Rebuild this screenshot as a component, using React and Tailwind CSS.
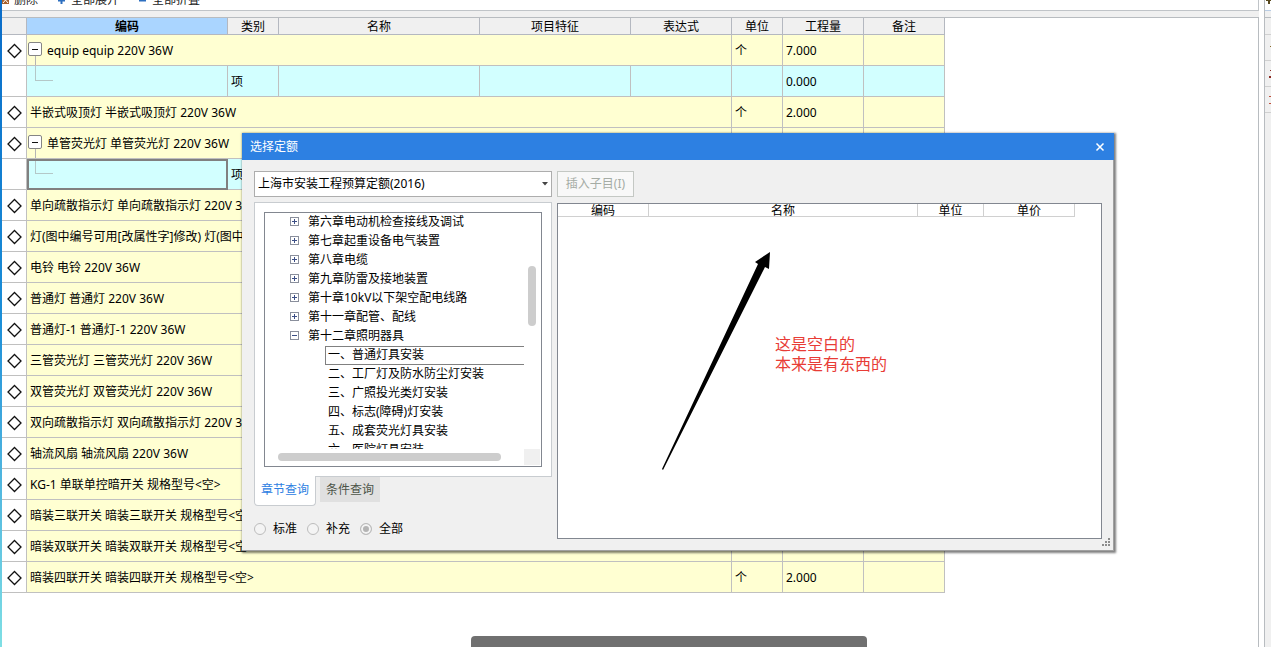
import { useState } from 'react'

const COLUMNS = [
  { label: '', width: 25 },
  { label: '编码', width: 201 },
  { label: '类别', width: 51 },
  { label: '名称', width: 201 },
  { label: '项目特征', width: 151 },
  { label: '表达式', width: 101 },
  { label: '单位', width: 51 },
  { label: '工程量', width: 81 },
  { label: '备注', width: 81 },
]

const ROWS = [
  { name: 'equip equip 220V 36W', qty: '7.000', open: true },
  { child: true, qty: '0.000' },
  { name: '半嵌式吸顶灯 半嵌式吸顶灯 220V 36W', qty: '2.000' },
  { name: '单管荧光灯 单管荧光灯 220V 36W', qty: '2.000', open: true },
  { child: true, qty: '0.000', selected: true },
  { name: '单向疏散指示灯 单向疏散指示灯 220V 36W', qty: '2.000' },
  { name: '灯(图中编号可用[改属性字]修改) 灯(图中编号可用[改属性字]修改)', qty: '2.000' },
  { name: '电铃 电铃 220V 36W', qty: '2.000' },
  { name: '普通灯 普通灯 220V 36W', qty: '2.000' },
  { name: '普通灯-1 普通灯-1 220V 36W', qty: '2.000' },
  { name: '三管荧光灯 三管荧光灯 220V 36W', qty: '2.000' },
  { name: '双管荧光灯 双管荧光灯 220V 36W', qty: '2.000' },
  { name: '双向疏散指示灯 双向疏散指示灯 220V 36W', qty: '2.000' },
  { name: '轴流风扇 轴流风扇 220V 36W', qty: '2.000' },
  { name: 'KG-1 单联单控暗开关 规格型号<空>', qty: '2.000' },
  { name: '暗装三联开关 暗装三联开关 规格型号<空>', qty: '2.000' },
  { name: '暗装双联开关 暗装双联开关 规格型号<空>', qty: '2.000' },
  { name: '暗装四联开关 暗装四联开关 规格型号<空>', qty: '2.000' },
]

const CHAPTERS = [
  '第六章电动机检查接线及调试',
  '第七章起重设备电气装置',
  '第八章电缆',
  '第九章防雷及接地装置',
  '第十章10kV以下架空配电线路',
  '第十一章配管、配线',
  '第十二章照明器具',
]

const SECTIONS = [
  '一、普通灯具安装',
  '二、工厂灯及防水防尘灯安装',
  '三、广照投光类灯安装',
  '四、标志(障碍)灯安装',
  '五、成套荧光灯具安装',
  '六、医院灯具安装',
]

function Diamond() {
  return (
    <svg width="16" height="16" viewBox="0 0 16 16" className="mx-auto block">
      <path d="M8.500 1.500 15 8 8.500 14.500 2 8Z" fill="#fff" stroke="#111" strokeWidth="1.3" />
    </svg>
  )
}

function TreeToggle({ open, label }) {
  return (
    <button aria-label={label} className="mt-1 shrink-0">
      <svg width="9" height="9" viewBox="0 0 9 9" className="block">
        <rect x=".5" y=".5" width="8" height="8" fill="#fff" stroke="#8a8f9c" />
        <path d={open ? 'M2 4.5h5' : 'M2 4.5h5M4.5 2v5'} stroke="#3c4f86" />
      </svg>
    </button>
  )
}

function RowToggle() {
  return (
    <button aria-label="折叠" className="shrink-0">
      <svg width="14" height="14" viewBox="0 0 14 14" className="block">
        <rect x=".5" y=".5" width="13" height="13" rx="1.5" fill="#fff" stroke="#858585" />
        <path d="M4 7.500h6" stroke="#111" />
      </svg>
    </button>
  )
}

function GridRow({ row }) {
  const cell = 'h-[31px] border-r border-b border-[#c0c0c0] p-0'
  const text = `${cell} pt-[2px] pl-[3px]`
  if (row.child) {
    return (
      <tr className="bg-[#d2ffff]">
        <td className={`${cell} bg-white`} />
        <td className={`${cell} align-top ${row.selected ? 'outline-2 -outline-offset-2 outline-[#808080]' : ''}`}>
          <div className="ml-2 h-[15px] w-[18px] border-b border-l border-[#b4c8c8]" />
        </td>
        <td className={text}>项</td>
        <td className={cell} />
        <td className={cell} />
        <td className={cell} />
        <td className={cell} />
        <td className={text}>{row.qty}</td>
        <td className={cell} />
      </tr>
    )
  }
  return (
    <tr className="bg-[#ffffd2]">
      <td className={`${cell} bg-white pt-[2px]`}><Diamond /></td>
      {row.open ? (
        <td colSpan={5} className={cell}>
          <div className="flex h-[30px] pl-px">
            <div className="flex w-[14px] shrink-0 flex-col items-center pt-[7px]">
              <RowToggle />
              <div className="w-px grow bg-[#b4b4b4]" />
            </div>
            <span className="pl-[5px] leading-8">{row.name}</span>
          </div>
        </td>
      ) : (
        <td colSpan={5} className={text}>{row.name}</td>
      )}
      <td className={text}>个</td>
      <td className={text}>{row.qty}</td>
      <td className={cell} />
    </tr>
  )
}

function QuantityGrid() {
  return (
    <table className="w-[943px] table-fixed border-separate border-spacing-0">
      <colgroup>
        {COLUMNS.map((c, i) => <col key={i} style={{ width: c.width }} />)}
      </colgroup>
      <thead>
        <tr>
          {COLUMNS.map((c, i) => (
            <th key={i}
              className={`border-r border-b border-[#b4b8c0] p-0 ${i === 1 ? 'bg-[#aad5ff] font-bold' : 'bg-[#f0f0f0] font-normal'}`}>
              <div className="h-4 leading-[18px]">{c.label}</div>
            </th>
          ))}
        </tr>
      </thead>
      <tbody>
        {ROWS.map((row, i) => <GridRow key={i} row={row} />)}
      </tbody>
    </table>
  )
}

function ChapterTree() {
  return (
    <div className="flex border border-[#828790] bg-white">
      <div className="min-w-0 grow">
        <ul className="h-[236px] overflow-hidden">
          {CHAPTERS.map((c, i) => (
            <li key={c} className="flex h-[19px] items-start gap-[9px] pl-[25px]">
              <TreeToggle open={i === CHAPTERS.length - 1} label={c} />
              <span className="leading-[17px] whitespace-nowrap">{c}</span>
            </li>
          ))}
          {SECTIONS.map((s, i) => (
            <li key={s}
              className={`ml-[60px] h-[19px] border-y border-l pl-[2px] leading-4 whitespace-nowrap ${i === 0 ? 'border-[#808080]' : 'border-transparent'}`}>
              {s}
            </li>
          ))}
        </ul>
        <div className="h-[17px] pt-1 pl-[13px]">
          <div className="h-2 w-[223px] rounded-full bg-[#cdcdcd]" />
        </div>
      </div>
      <div className="flex w-[17px] shrink-0 flex-col">
        <div className="grow pt-[53px] pl-1">
          <div className="h-[60px] w-2 rounded-full bg-[#cdcdcd]" />
        </div>
        <div className="mr-px mb-px h-4 bg-[#f0f0f0]" />
      </div>
    </div>
  )
}

const SCOPES = ['标准', '补充', '全部']

function QuotaDialog() {
  const [scope, setScope] = useState('全部')
  return (
    <div role="dialog" aria-label="选择定额"
      className="absolute top-[133px] left-[242px] w-[872px] bg-[#f0f0f0] shadow-[1px_1px_2px_1px_rgba(0,0,0,0.5)]">
      <div className="flex h-[27px] items-center justify-between bg-[#2d80e2] pr-[9px] pl-2 text-white">
        <h2>选择定额</h2>
        <button aria-label="关闭">
          <svg width="10" height="10" viewBox="0 0 10 10" className="block">
            <path d="M1.500 1.500 8.500 8.500M8.500 1.500 1.500 8.500" stroke="#fff" strokeWidth="1.5" />
          </svg>
        </button>
      </div>

      <div className="flex h-[391px] gap-[5px] border-r border-b border-[#a0a0a0] pt-[11px] pr-[11px] pb-[11px] pl-3">
        <div className="flex w-[298px] shrink-0 flex-col">
          <div className="relative">
            <select aria-label="定额库"
              className="block h-[26px] w-full appearance-none border border-[#adadad] bg-white pl-[3px]">
              <option>上海市安装工程预算定额(2016)</option>
            </select>
            <svg width="6" height="4" viewBox="0 0 6 4" className="pointer-events-none absolute top-[11px] right-1">
              <path d="M0 0h6L3 3.500Z" fill="#444" />
            </svg>
          </div>

          <div className="mt-[5px] border border-[#c8ccd0] bg-white p-[9px]">
            <ChapterTree />
          </div>
          <div className="flex items-start gap-1">
            <button className="-mt-px h-[30px] w-[62px] rounded-b-sm border border-t-0 border-[#c8ccd0] bg-white pb-[2px] text-[#2d80e2]">
              章节查询
            </button>
            <button className="h-[25px] w-[60px] bg-[#e0e0e0] text-[#4c5448]">条件查询</button>
          </div>

          <div className="mt-[15px] flex gap-[10px]">
            {SCOPES.map(s => (
              <label key={s} className="flex items-center gap-[7px] whitespace-nowrap">
                <input type="radio" name="scope" checked={scope === s} onChange={() => setScope(s)}
                  className="size-3 appearance-none rounded-full border border-[#bcbcbc] bg-[#f4f4f4] checked:bg-[#b4b4b4] checked:shadow-[inset_0_0_0_2px_#f4f4f4]" />
                {s}
              </label>
            ))}
          </div>
        </div>

        <div className="flex min-w-0 grow flex-col items-start">
          <button disabled className="h-[26px] w-[77px] border border-[#c4c8c4] bg-[#f8f8f8] text-[#a5aca5]">
            插入子目(I)
          </button>
          <div className="relative mt-[6px] w-full grow border border-[#828790] bg-white">
            <table className="w-[517px] table-fixed border-separate border-spacing-0">
              <thead>
                <tr className="[&>th]:border-r [&>th]:border-b [&>th]:border-[#d0d0d0] [&>th]:p-0 [&>th]:font-normal">
                  <th className="w-[91px]"><div className="h-3 leading-[14px]">编码</div></th>
                  <th><div className="h-3 leading-[14px]">名称</div></th>
                  <th className="w-[66px]"><div className="h-3 leading-[14px]">单位</div></th>
                  <th className="w-[91px]"><div className="h-3 leading-[14px]">单价</div></th>
                </tr>
              </thead>
            </table>
            <svg width="110" height="220" viewBox="0 0 110 220" className="absolute top-[48px] left-[103px]">
              <path d="M109 0 108 17 104 15 2 218 1 217 97 12 94 10Z" fill="#000" />
            </svg>
            <p className="absolute top-[130px] left-[217px] text-base leading-5 text-[#e83c36]">
              这是空白的<br />本来是有东西的
            </p>
          </div>
        </div>
      </div>

      <svg width="9" height="9" viewBox="0 0 9 9" fill="#8c8c8c" className="absolute right-[3px] bottom-1">
        <path d="M6 0h2v2H6zM3 3h2v2H3zM6 3h2v2H6zM0 6h2v2H0zM3 6h2v2H3zM6 6h2v2H6z" />
      </svg>
    </div>
  )
}

function Toolbar() {
  return (
    <div className="flex h-[11px] items-end overflow-hidden border-r border-b border-[#c0c4c8] bg-white pb-[2px] leading-4 text-[#222]">
      <button className="flex items-center gap-1">
        <svg width="8" height="10" viewBox="0 0 8 10">
          <rect width="7" height="9" fill="#a8622e" />
          <path d="M1 2 6 8M6 2 1 8" stroke="#fff" />
        </svg>
        删除
      </button>
      <button className="ml-5 flex items-center gap-[6px]">
        <svg width="7" height="7" viewBox="0 0 7 7"><path d="M3.500 0v7M0 3.500h7" stroke="#2d6fc0" strokeWidth="2" /></svg>
        全部展开
      </button>
      <button className="ml-5 flex items-center gap-[6px]">
        <svg width="7" height="7" viewBox="0 0 7 7"><path d="M0 3.500h7" stroke="#2d6fc0" strokeWidth="2" /></svg>
        全部折叠
      </button>
    </div>
  )
}

function SidePanel() {
  return (
    <aside className="ml-[5px] w-[7px] shrink-0 border-l border-[#b8bcc0] bg-[#f0f0f0]">
      <div className="flex h-[11px] justify-end border-b border-[#b8cce4] bg-white">
        <svg width="5" height="4" viewBox="0 0 5 4"><path d="M0 0h5v1H4v3H2V1H0z" fill="#5a4a20" /></svg>
      </div>
      <div className="h-[7px] border-b border-[#b8bcc0]" />
      <div className="h-[17px] border-b border-[#d0d0d0]" />
      <div className="flex h-[26px] items-center justify-end border-b border-[#d0d0d0]">
        <svg width="1" height="8" viewBox="0 0 1 8"><path d="M0 2h1v1H0z" fill="#8a6a2a" /></svg>
      </div>
      <div className="flex h-[26px] items-center justify-end border-b border-[#d0d0d0]">
        <svg width="2" height="10" viewBox="0 0 2 10"><path d="M1 1h1v1H1zM0 7h2v2H0z" fill="#8c2a22" /></svg>
      </div>
      <div className="flex h-[26px] items-center justify-end border-b border-[#d0d0d0]">
        <svg width="2" height="10" viewBox="0 0 2 10"><path d="M0 1h2v1H0zM0 8h2v1H0z" fill="#c0503c" /></svg>
      </div>
    </aside>
  )
}

export default function App() {
  return (
    <div className="relative flex h-screen overflow-hidden bg-white font-['Noto_Sans','Noto_Sans_CJK_SC',sans-serif] text-xs text-black">
      <div className="w-[2px] shrink-0 bg-linear-to-b from-[#0a6cc8] via-[#1c8fd8] to-[#7fdfe4]" />
      <main className="flex min-w-0 grow flex-col">
        <Toolbar />
        <div className="h-[6px] shrink-0 bg-[#f0f0f0]" />
        <div className="grow border-t border-r border-[#b8bcc0]">
          <QuantityGrid />
        </div>
      </main>
      <SidePanel />
      <QuotaDialog />
      <div className="absolute bottom-0 left-[471px] h-[11px] w-[396px] rounded-t bg-[#707070]" />
    </div>
  )
}
